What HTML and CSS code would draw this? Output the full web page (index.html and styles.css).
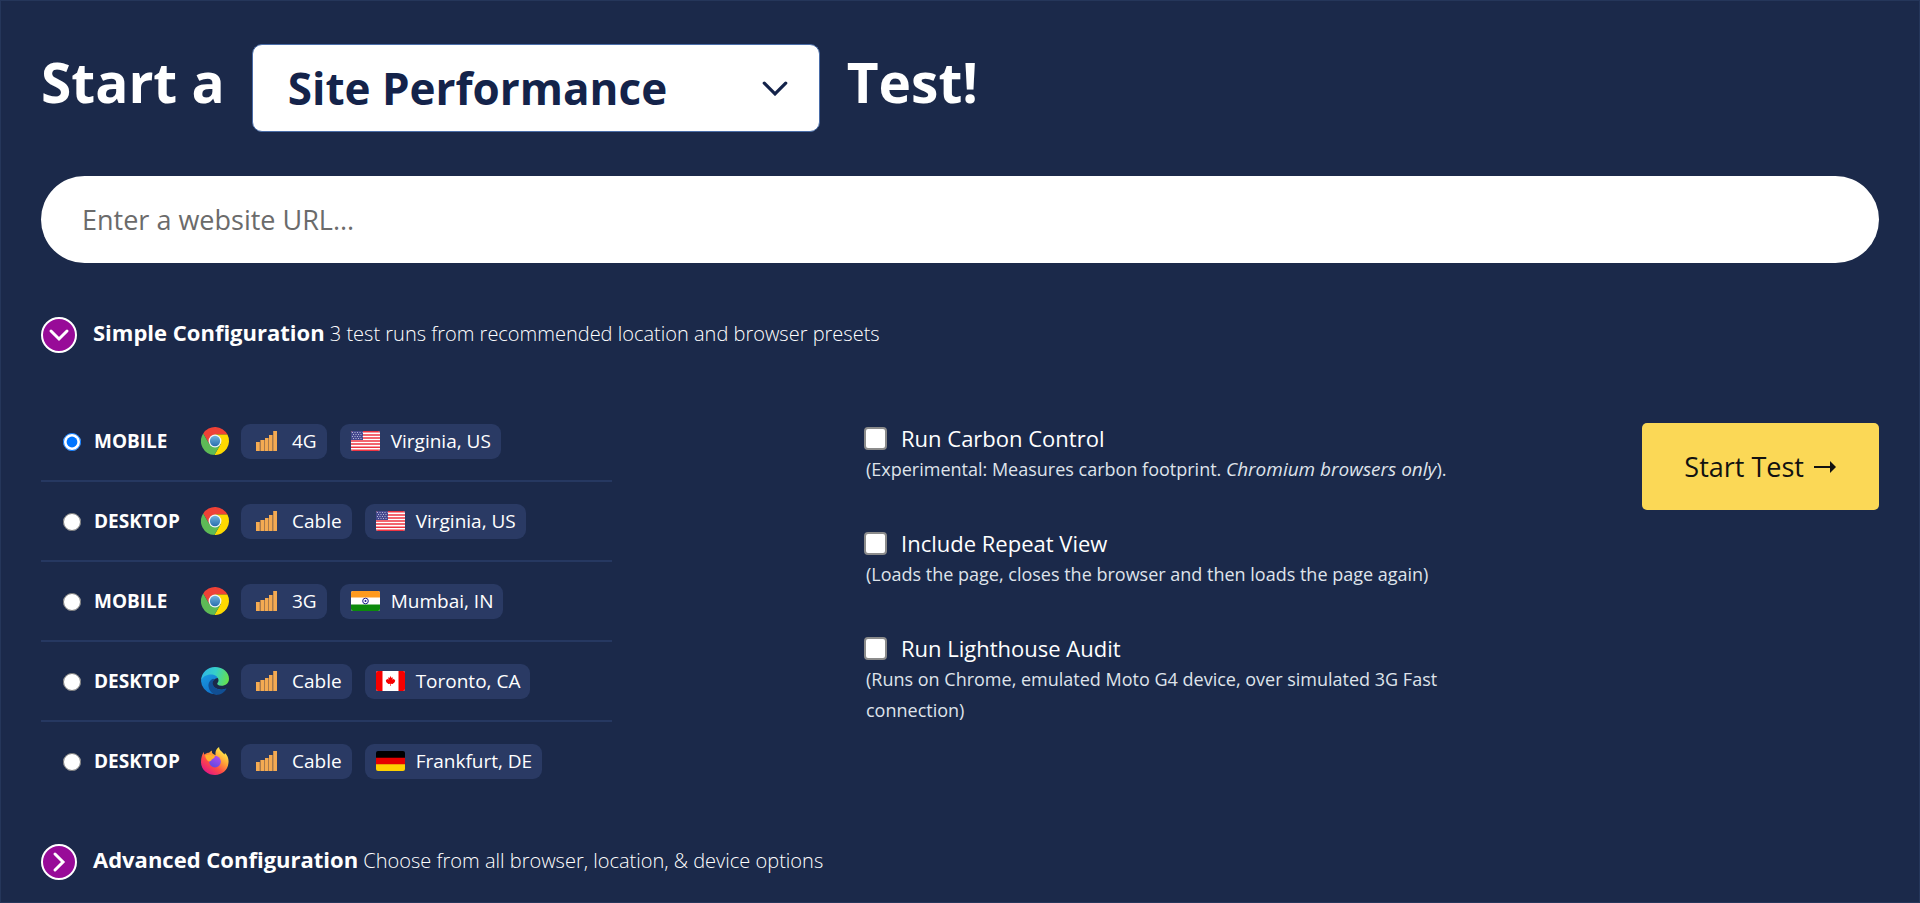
FILE: index.html
```
<!DOCTYPE html>
<html lang="en">
<head>
  <meta charset="utf-8">
  <title>Start a Test</title>
  <link rel="stylesheet" href="styles.css">
</head>
<body>
  <!-- Shared icons -->
  <svg class="icon-defs" aria-hidden="true">
    <defs>
      <linearGradient id="chrome-blue" x1="0" y1="0" x2="0" y2="1">
        <stop offset="0" stop-color="#6fb1dc"/>
        <stop offset="1" stop-color="#2c6fb0"/>
      </linearGradient>
      <linearGradient id="edge-top" x1="0" y1="0.3" x2="1" y2="0.5">
        <stop offset="0" stop-color="#2fb5e6"/>
        <stop offset="0.5" stop-color="#36cfc9"/>
        <stop offset="1" stop-color="#65e04f"/>
      </linearGradient>
      <linearGradient id="edge-left" x1="0" y1="0" x2="0.6" y2="1">
        <stop offset="0" stop-color="#1b9de2"/>
        <stop offset="1" stop-color="#0f6fc9"/>
      </linearGradient>
      <linearGradient id="fox-body" x1="0.85" y1="0.1" x2="0.2" y2="0.95">
        <stop offset="0" stop-color="#fff44f"/>
        <stop offset="0.35" stop-color="#ffa436"/>
        <stop offset="0.65" stop-color="#ff4a45"/>
        <stop offset="1" stop-color="#e31587"/>
      </linearGradient>
      <linearGradient id="fox-globe" x1="0.8" y1="0" x2="0.3" y2="1">
        <stop offset="0" stop-color="#b24bf0"/>
        <stop offset="1" stop-color="#5f4ae0"/>
      </linearGradient>
    </defs>
    <symbol id="chrome" viewBox="0 0 48 48">
      <path fill="#ef4136" d="M3.800 11A24 24 0 0 1 45.300 13H24v11l-9.500 5.500z"/>
      <path fill="#fdd900" d="M45.300 13A24 24 0 0 1 22.900 48l10.600-18.500L24 24V13z"/>
      <path fill="#5dba56" d="M22.900 48A24 24 0 0 1 3.800 11l10.700 18.500L24 24l9.500 5.500z"/>
      <circle cx="24" cy="24" r="11" fill="#f1f5f7"/>
      <circle cx="24" cy="24" r="8.800" fill="url(#chrome-blue)"/>
    </symbol>
    <symbol id="edge" viewBox="0 0 48 48">
      <path fill="url(#edge-left)" d="M0 24C1 14 9 9 18 9c10 0 16 6 16 12-3-3-10-3-13 3-4 9 6 18 22 13A24 24 0 0 1 0 24z"/>
      <path fill="#114f94" d="M21 20c-6 2-9 8-8 14 1 7 7 13 13 14 8 0 14-4 18-11-10 5-24 0-23-10 0-3 1-4 3-5z"/>
      <path fill="#1b294a" d="M29 21c-5-1-9 2-9 7 1 7 9 11 17 10l8-3-8-3-9-3z"/>
      <path fill="url(#edge-top)" d="M0 23C1 10 11 0 24 0c14 0 24 9 24 20 0 8-6 12-13 12-6 0-8-2-7-4 2-2 2-4 2-6-1-6-7-9-13-9C9 13 3 17 0 23z"/>
    </symbol>
    <symbol id="firefox" viewBox="0 0 48 48">
      <path fill="url(#fox-body)" d="M5 8c0 3 0 4 1 5 2-2 5-3 8-3 1-2 3-3 5-4-1 3 0 5 2 6l4 2c-1-6 1-11 6-14 0 6 6 8 9 13 1-1 1-2 1-3 5 5 7 11 6 18-1 12-11 20-23 20S0 39 0 26C0 18 2 12 5 8z"/>
      <circle cx="24" cy="25" r="10" fill="url(#fox-globe)"/>
      <path fill="#ffb02e" d="M7 14c5-2 10-1 13 1h4c0 4-4 5-6 7 0 2-2 2-4 3-3-1-6-5-7-11z"/>
    </symbol>
    <symbol id="signal" viewBox="0 0 21 20">
      <path fill="#a87a4c" d="M0 11h4V9h5V7h4V4h4V0h4v20H0z"/>
      <path fill="#f4aa52" d="M0 11h3.500v9H0zM5 9h3v11H5zM9 7h3v13H9zM13 4h3v16h-3zM17.500 0H21v20h-3.500z"/>
    </symbol>
    <symbol id="arrow" viewBox="0 0 22 12">
      <path d="M0 6h17" stroke="#111" stroke-width="2" fill="none"/>
      <path d="M16 0l6 6-6 6z" fill="#111"/>
    </symbol>
    <symbol id="flag-us" viewBox="0 0 29 20">
      <path fill="#fff" d="M0 0h29v20H0z"/>
      <path stroke="#ee3340" stroke-width="1.500" d="M0 .8h29M0 3.900h29M0 7h29M0 10h29M0 13.100h29M0 16.200h29M0 19.200h29"/>
      <path fill="#45488e" d="M0 0h12v9H0z"/>
      <path stroke="#b5b7d6" stroke-dasharray="1 1.500" d="M1 1.500h10.500M2 3.500h9M1 5.500h10.500M2 7.500h9"/>
    </symbol>
    <symbol id="flag-in" viewBox="0 0 29 20">
      <path fill="#fff" d="M0 0h29v20H0z"/>
      <path fill="#ff9a1f" d="M0 0h29v6.500H0z"/>
      <path fill="#0c8a0c" d="M0 13.500h29V20H0z"/>
      <circle cx="14.500" cy="10" r="2.800" fill="none" stroke="#1a1a8c"/>
      <circle cx="14.500" cy="10" r="1" fill="#1a1a8c"/>
    </symbol>
    <symbol id="flag-ca" viewBox="0 0 29 20">
      <path fill="#fff" d="M0 0h29v20H0z"/>
      <path fill="#f60000" d="M0 0h6.500v20H0zM22.500 0H29v20h-6.500z"/>
      <path fill="#f60000" d="M14.500 5l1 2 1.300-.7-.3 2.500L18 7.800l.3 1 1 .200-.6 1.300.5.500-2.600 2.200-1.800-.2V15h-.6v-2.200l-1.800.2-2.600-2.200.5-.5-.6-1.300 1-.2.300-1 1.500 1-.3-2.500 1.300.7z"/>
    </symbol>
    <symbol id="flag-de" viewBox="0 0 29 20">
      <path fill="#000" d="M0 0h29v7H0z"/>
      <path fill="#e60000" d="M0 6.700h29v7H0z"/>
      <path fill="#ffd000" d="M0 13.300h29V20H0z"/>
    </symbol>
  </svg>

  <form class="test-form">
    <h1 class="title">
      <label for="test-type">Start a</label>
      <span class="type-picker">
        <select id="test-type">
          <option>Site Performance</option>
        </select>
        <svg viewBox="0 0 24 14"><path d="M2 2l10 10L22 2"/></svg>
      </span>
      <span>Test!</span>
    </h1>

    <input class="url" type="text" placeholder="Enter a website URL..." aria-label="Website URL">

    <button class="config" type="button" aria-expanded="true">
      <svg class="toggle" viewBox="0 0 36 36"><circle cx="18" cy="18" r="17"/><path d="M10 14l8 8 8-8"/></svg>
      <span><strong>Simple Configuration</strong> 3 test runs from recommended location and browser presets</span>
    </button>

    <div class="panel">
      <ul class="presets">
        <li>
          <label>
            <input type="radio" name="preset" checked>
            <strong>Mobile</strong>
            <svg class="browser"><use href="#chrome"/></svg>
            <span class="pill speed"><svg><use href="#signal"/></svg>4G</span>
            <span class="pill place"><svg><use href="#flag-us"/></svg>Virginia, US</span>
          </label>
        </li>
        <li>
          <label>
            <input type="radio" name="preset">
            <strong>Desktop</strong>
            <svg class="browser"><use href="#chrome"/></svg>
            <span class="pill speed"><svg><use href="#signal"/></svg>Cable</span>
            <span class="pill place"><svg><use href="#flag-us"/></svg>Virginia, US</span>
          </label>
        </li>
        <li>
          <label>
            <input type="radio" name="preset">
            <strong>Mobile</strong>
            <svg class="browser"><use href="#chrome"/></svg>
            <span class="pill speed"><svg><use href="#signal"/></svg>3G</span>
            <span class="pill place"><svg><use href="#flag-in"/></svg>Mumbai, IN</span>
          </label>
        </li>
        <li>
          <label>
            <input type="radio" name="preset">
            <strong>Desktop</strong>
            <svg class="browser"><use href="#edge"/></svg>
            <span class="pill speed"><svg><use href="#signal"/></svg>Cable</span>
            <span class="pill place"><svg><use href="#flag-ca"/></svg>Toronto, CA</span>
          </label>
        </li>
        <li>
          <label>
            <input type="radio" name="preset">
            <strong>Desktop</strong>
            <svg class="browser"><use href="#firefox"/></svg>
            <span class="pill speed"><svg><use href="#signal"/></svg>Cable</span>
            <span class="pill place"><svg><use href="#flag-de"/></svg>Frankfurt, DE</span>
          </label>
        </li>
      </ul>

      <div class="options">
        <div class="option">
          <label><input type="checkbox"> Run Carbon Control</label>
          <p>(Experimental: Measures carbon footprint. <em>Chromium browsers only</em>).</p>
        </div>
        <div class="option">
          <label><input type="checkbox"> Include Repeat View</label>
          <p>(Loads the page, closes the browser and then loads the page again)</p>
        </div>
        <div class="option">
          <label><input type="checkbox"> Run Lighthouse Audit</label>
          <p>(Runs on Chrome, emulated Moto G4 device, over simulated 3G Fast connection)</p>
        </div>
      </div>

      <button class="start" type="submit">Start Test <svg><use href="#arrow"/></svg></button>
    </div>

    <button class="config" type="button" aria-expanded="false">
      <svg class="toggle" viewBox="0 0 36 36"><circle cx="18" cy="18" r="17"/><path d="M14 10l8 8-8 8"/></svg>
      <span><strong>Advanced Configuration</strong> Choose from all browser, location, &amp; device options</span>
    </button>
  </form>
</body>
</html>
```
FILE: styles.css
```
* {
  box-sizing: border-box;
}

body {
  margin: 0;
  background: #1b294a;
  color: #fff;
  font-family: "Open Sans", sans-serif;
  font-size: 19px;
}

button,
input,
select {
  font-family: inherit;
}

.icon-defs {
  position: absolute;
  width: 0;
  height: 0;
}

.test-form {
  min-height: 100vh;
  padding: 43px 40px 20px;
  border: 1px solid #25365a;
}

/* Heading with the test type drop-down */
.title {
  display: flex;
  align-items: center;
  gap: 27px;
  margin: 0 0 44px;
  font-size: 55px;
  line-height: 74px;
}

.title > label,
.title > span:last-child {
  padding-bottom: 12px;
}

.type-picker {
  position: relative;
}

.type-picker select {
  display: block;
  width: 568px;
  height: 88px;
  padding: 0 35px;
  appearance: none;
  border: 1px solid #4a6da8;
  border-radius: 10px;
  background: #fff;
  color: #14234a;
  font-size: 44px;
  font-weight: 700;
}

.type-picker svg {
  position: absolute;
  top: 37px;
  right: 32px;
  width: 26px;
  height: 15px;
  fill: none;
  stroke: #14234a;
  stroke-width: 3;
  stroke-linecap: round;
  pointer-events: none;
}

.url {
  display: block;
  width: 100%;
  height: 87px;
  padding: 0 41px;
  border: 0;
  border-radius: 44px;
  background: #fff;
  color: #111;
  font-size: 27px;
}

.url::placeholder {
  color: #6b6b6b;
}

/* Section toggles */
.config {
  display: flex;
  align-items: center;
  gap: 16px;
  margin-top: 54px;
  padding: 0;
  border: 0;
  background: none;
  color: #fff;
  font-size: 20px;
  font-weight: 300;
  line-height: 30px;
}

.panel + .config {
  margin-top: 44px;
}

.config span {
  padding-bottom: 4px;
}

.config strong {
  font-size: 22px;
  font-weight: 700;
}

.toggle {
  width: 36px;
  height: 36px;
  fill: #980b98;
  stroke: #fff;
  stroke-width: 2;
}

.toggle path {
  fill: none;
  stroke-width: 3;
  stroke-linecap: round;
}

.panel {
  display: flex;
  align-items: flex-start;
  margin-top: 49px;
}

/* Recommended presets */
.presets {
  width: 571px;
  margin: 0;
  padding: 0;
  list-style: none;
}

.presets li + li {
  border-top: 2px solid #263861;
}

.presets label {
  display: flex;
  align-items: center;
  height: 78px;
  padding-left: 22px;
}

.presets input {
  width: 18px;
  height: 18px;
  margin: 2px 13px 0 0;
}

.presets strong {
  width: 107px;
  text-transform: uppercase;
}

.browser {
  width: 28px;
  height: 28px;
}

.pill {
  display: flex;
  align-items: center;
  height: 35px;
  margin-left: 12px;
  border-radius: 9px;
  background: #2a3a64;
}

.speed {
  padding: 0 10px 0 15px;
}

.speed svg {
  width: 21px;
  height: 20px;
  margin-right: 15px;
}

.place {
  margin-left: 13px;
  padding: 0 10px 0 11px;
}

.place svg {
  width: 29px;
  height: 20px;
  margin-right: 11px;
  border-radius: 2px;
}

/* Extra test options */
.options {
  width: 620px;
  margin: 20px 0 0 252px;
}

.option {
  margin-bottom: 42px;
}

.option label {
  display: flex;
  align-items: center;
  gap: 14px;
  font-size: 22px;
  line-height: 32px;
}

.option input {
  width: 23px;
  height: 23px;
  margin: 0;
  appearance: none;
  border: 2px solid #8b8b8b;
  border-radius: 4px;
  background: #fff;
}

.option input:checked {
  background: #0075ff;
}

.option p {
  margin: 0;
  padding-left: 2px;
  color: #dfe3ea;
  font-size: 18px;
  line-height: 31px;
}

.option em {
  font-size: 19px;
}

.start {
  display: flex;
  align-items: center;
  gap: 10px;
  height: 87px;
  margin: 21px 0 0 auto;
  padding: 0 43px 0 42px;
  border: 0;
  border-radius: 5px;
  background: #fbd856;
  color: #111;
  font-size: 27px;
}

.start svg {
  width: 22px;
  height: 12px;
}
```
